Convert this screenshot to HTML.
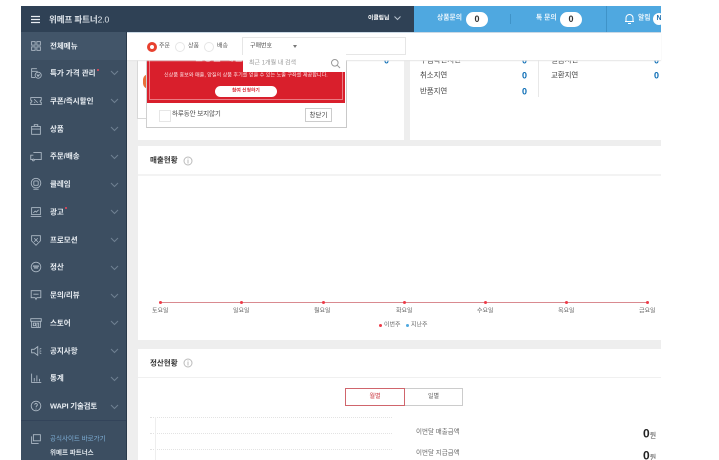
<!DOCTYPE html>
<html lang="ko"><head><meta charset="utf-8"><title>위메프 파트너 2.0</title>
<style>
html,body{margin:0;padding:0;width:719px;height:460px;overflow:hidden;background:#fff}
body{font-family:"Liberation Sans","Noto Sans CJK KR",sans-serif;position:relative}
#w{position:absolute;left:0;top:0;width:719px;height:460px;overflow:hidden;filter:blur(.35px)}
#w div,#w span.a,#w svg{position:absolute}
.t{position:absolute;white-space:nowrap;line-height:12px;transform:translateY(-5.5px)}
.m{left:50px;font-size:7.5px;font-weight:700;color:#e8edf2}
.v{font-size:9px;font-weight:700;color:#0a6cb5}
.l{font-size:7.500px;letter-spacing:-.1px;color:#444}
.g{font-size:6px;color:#666}
svg.i{left:29px;width:14px;height:14px;fill:none;stroke:#aebac6;stroke-width:1}
svg.c{left:110px;width:9px;height:6px;fill:none;stroke:#6f8092;stroke-width:1}
.pill{background:#fff;border-radius:9px;height:15px;color:#333;font-size:9px;font-weight:700;text-align:center;line-height:15px}
.dot{width:3px;height:3px;border-radius:50%;background:#ee3b48;top:301px}
.day{top:311px}
.dl{left:150px;width:242px;height:0;border-top:1px dotted #e3e3e3}
</style></head><body><div id="w">

<div style="left:21px;top:6px;width:640px;height:454px;background:#eeeeee"></div>

<!-- left card + popup -->
<div style="left:138px;top:60px;width:266px;height:80px;background:#fff"></div>
<div style="left:137px;top:60px;width:9px;height:58px;background:#fff;border:1px solid #d8d8d8;border-top:0"></div>
<div style="left:143px;top:74px;width:6px;height:15px;background:#e8703a;border-radius:6px 0 0 6px"></div>
<div style="left:146px;top:60px;width:199px;height:67px;background:#fff;border-right:1px solid #c9c9c9;border-bottom:1px solid #c9c9c9;border-left:1px solid #d0d0d0"></div>
<div style="left:147px;top:60px;width:198px;height:43px;background:#d91f2c"></div>
<div style="left:149px;top:60px;width:194px;height:40px;border:1px solid #ea7b83;border-top:0;box-sizing:border-box"></div>
<span class="t" style="left:194px;top:58px;font-size:10px;font-weight:700;color:#fff">신상품 체험 이벤트</span>
<span class="t" style="left:164px;top:75px;font-size:5.100px;color:#fbdfe1">신상품 홍보와 매출, 양질의 상품 후기를 얻을 수 있는 노출 구좌를 제공합니다.</span>
<div style="left:215px;top:86px;width:62px;height:11px;background:#fff;border-radius:6px"></div>
<span class="t" style="left:232px;top:91px;font-size:4.800px;font-weight:700;color:#d91f2c">참여 신청하기</span>
<div style="left:159px;top:110px;width:10px;height:10px;background:#fff;border:1px solid #e6e6e6"></div>
<span class="t l" style="left:172px;top:114px;font-size:6.500px">하루동안 보지않기</span>
<div style="left:305px;top:108px;width:27px;height:14px;border:1px solid #ccc;box-sizing:border-box;background:#fff;font-size:6.500px;color:#444;text-align:center;line-height:13px">창닫기</div>
<span class="t v" style="left:384px;top:60px">0</span>

<!-- right card -->
<div style="left:410px;top:60px;width:251px;height:80px;background:#fff"></div>
<div style="left:538px;top:60px;width:1px;height:37px;background:#e8e8e8"></div>
<span class="t l" style="left:420px;top:60px">구입확인지연</span><span class="t v" style="left:522px;top:60px">0</span>
<span class="t l" style="left:551px;top:60px">결품지연</span><span class="t v" style="left:654px;top:60px">0</span>
<span class="t l" style="left:420px;top:75px">취소지연</span><span class="t v" style="left:522px;top:75px">0</span>
<span class="t l" style="left:551px;top:75px">교환지연</span><span class="t v" style="left:654px;top:75px">0</span>
<span class="t l" style="left:420px;top:91px">반품지연</span><span class="t v" style="left:522px;top:91px">0</span>

<!-- top filter bar -->
<div style="left:127px;top:32px;width:534px;height:28px;background:#fff;box-shadow:0 1px 1px #e6e6e6"></div>
<div style="left:147px;top:42px;width:4px;height:4px;border:3px solid #e8412f;border-radius:50%;background:#fff"></div>
<span class="t g" style="left:159px;top:46px;color:#555">주문</span>
<div style="left:175px;top:42px;width:8px;height:8px;border:1px solid #e6e6e6;border-radius:50%"></div>
<span class="t g" style="left:188px;top:46px;color:#555">상품</span>
<div style="left:204px;top:42px;width:8px;height:8px;border:1px solid #e6e6e6;border-radius:50%"></div>
<span class="t g" style="left:217px;top:46px;color:#555">배송</span>
<div style="left:242px;top:37px;width:164px;height:18px;border:1px solid #e6e6e6;box-sizing:border-box;background:#fff"></div>
<span class="t g" style="left:250px;top:46px;color:#444">구매번호</span>
<div style="left:293px;top:45px;width:0;height:0;border:2px solid transparent;border-top:3px solid #777"></div>
<div style="left:243px;top:54px;width:103px;height:18px;background:#fff"></div>
<span class="t g" style="left:249px;top:63px;color:#999">최근 1개월 내 검색</span>
<svg style="left:330px;top:58px;width:11px;height:11px" viewBox="0 0 11 11" fill="none" stroke="#999"><circle cx="4.800" cy="4.800" r="3.300"/><path d="M7.300 7.300L10 10"/></svg>

<!-- sales card -->
<div style="left:138px;top:146px;width:523px;height:194px;background:#fff"></div>
<div style="left:138px;top:174px;width:523px;height:2px;background:#f3f3f3"></div>
<span class="t" style="left:150px;top:160px;font-size:7.500px;font-weight:700;color:#333">매출현황</span>
<svg style="left:183px;top:156px;width:10px;height:10px" viewBox="0 0 10 10" fill="none" stroke="#bbb"><circle cx="5" cy="5" r="4"/><path d="M5 4v3.500M5 2.500v1"/></svg>
<div style="left:160px;top:302px;width:487px;height:1px;background:#d98a90"></div>
<div class="dot" style="left:159px"></div><div class="dot" style="left:240px"></div><div class="dot" style="left:322px"></div><div class="dot" style="left:403px"></div><div class="dot" style="left:484px"></div><div class="dot" style="left:565px"></div><div class="dot" style="left:646px"></div>
<span class="t g day" style="left:152px">토요일</span><span class="t g day" style="left:233px">일요일</span><span class="t g day" style="left:314px">월요일</span><span class="t g day" style="left:396px">화요일</span><span class="t g day" style="left:477px">수요일</span><span class="t g day" style="left:558px">목요일</span><span class="t g day" style="left:639px">금요일</span>
<div style="left:379px;top:324px;width:3px;height:3px;border-radius:50%;background:#ee3b48"></div>
<span class="t g" style="left:384px;top:325px">이번주</span>
<div style="left:406px;top:324px;width:3px;height:3px;border-radius:50%;background:#4fa8e0"></div>
<span class="t g" style="left:411px;top:325px">지난주</span>

<!-- settlement card -->
<div style="left:138px;top:349px;width:523px;height:111px;background:#fff"></div>
<div style="left:138px;top:377px;width:523px;height:1px;background:#f0f0f0"></div>
<span class="t" style="left:150px;top:363px;font-size:7.500px;font-weight:700;color:#333">정산현황</span>
<svg style="left:183px;top:358px;width:10px;height:10px" viewBox="0 0 10 10" fill="none" stroke="#bbb"><circle cx="5" cy="5" r="4"/><path d="M5 4v3.500M5 2.500v1"/></svg>
<div style="left:404px;top:388px;width:59px;height:18px;border:1px solid #ccc;box-sizing:border-box;font-size:6px;color:#555;text-align:center;line-height:16px">일별</div>
<div style="left:345px;top:388px;width:60px;height:18px;border:1px solid #d0656c;box-sizing:border-box;font-size:6px;color:#c8323c;text-align:center;line-height:16px;background:#fff">월별</div>
<div class="dl" style="top:417px"></div><div class="dl" style="top:433px"></div><div class="dl" style="top:449px"></div>
<div style="left:155px;top:417px;width:1px;height:43px;background:#eee"></div>
<span class="t g" style="left:416px;top:432px;font-size:6.500px">이번달 매출금액</span>
<span class="t g" style="left:416px;top:453px;font-size:6.500px">이번달 지급금액</span>
<span class="t" style="left:643px;top:433px;font-size:12px;font-weight:700;color:#222">0<span style="font-size:7px;font-weight:400;color:#444">원</span></span>
<span class="t" style="left:643px;top:455px;font-size:12px;font-weight:700;color:#222">0<span style="font-size:7px;font-weight:400;color:#444">원</span></span>

<!-- header -->
<div style="left:21px;top:6px;width:393px;height:26px;background:#2f4155"></div>
<div style="left:414px;top:6px;width:247px;height:26px;background:#4fa8e0"></div>
<div style="left:21px;top:32px;width:640px;height:1px;background:#a8c0d4;opacity:.6"></div>
<svg style="left:30px;top:15px;width:12px;height:9px" viewBox="0 0 12 9" stroke="#e8edf2" stroke-width="1.200"><path d="M1 1.500H10M1 4.500H10M1 7.500H10"/></svg>
<span class="t" style="left:49px;top:19px;font-size:8.500px;letter-spacing:-.1px;font-weight:700;color:#dfe5eb">위메프 파트너<span style="font-weight:400">2.0</span></span>
<span class="t" style="left:368px;top:18px;font-size:5.800px;font-weight:700;color:#fff">이클립님</span>
<svg style="left:394px;top:16px;width:7px;height:5px" viewBox="0 0 7 5" fill="none" stroke="#b9c4cf"><path d="M.5 .5L3.500 3.500L6.500 .5"/></svg>
<span class="t" style="left:437px;top:18px;font-size:6.800px;font-weight:700;color:#e6f3fb">상품문의</span>
<div class="pill" style="left:466px;top:12px;width:22px">0</div>
<div style="left:510px;top:14px;width:1px;height:10px;background:#3f93c8"></div>
<span class="t" style="left:536px;top:18px;font-size:6.800px;font-weight:700;color:#e6f3fb">톡 문의</span>
<div class="pill" style="left:560px;top:12px;width:22px">0</div>
<div style="left:606px;top:6px;width:1px;height:26px;background:#3f93c8"></div>
<svg style="left:624px;top:13px;width:11px;height:12px" viewBox="0 0 11 12" fill="none" stroke="#fff"><path d="M2 8.500V5a3.500 3.500 0 0 1 7 0V8.500M1 8.500H10M4 10.500H7"/></svg>
<span class="t" style="left:638px;top:18px;font-size:6.800px;font-weight:700;color:#e6f3fb">알림</span>
<div style="left:653px;top:13px;width:8px;height:12px;overflow:hidden"><div style="left:0;top:0;width:12px;height:12px;border-radius:50%;background:#fff;color:#1e6fae;font-size:7px;font-weight:700;line-height:12px;text-align:center">N</div></div>

<!-- sidebar -->
<div style="left:21px;top:32px;width:105px;height:428px;background:#3c4e61"></div>
<div style="left:21px;top:32px;width:105px;height:28px;background:#425569"></div>
<div style="left:126px;top:32px;width:1px;height:428px;background:#2a3a4b"></div>
<div style="left:21px;top:420px;width:105px;height:1px;background:#33445a"></div>

<svg class="i" style="top:39px" viewBox="0 0 16 16"><rect x="3" y="3" width="4" height="4"/><rect x="9" y="3" width="4" height="4"/><rect x="3" y="9" width="4" height="4"/><rect x="9" y="9" width="4" height="4"/></svg>
<span class="t m" style="top:46px">전체메뉴</span>

<svg class="i" style="top:66px" viewBox="0 0 16 16"><path d="M9 3H3v10h4M3 6h7"/><circle cx="10.500" cy="10.500" r="3.500"/><path d="M9 9.500l1 2 .5-1 .5 1 1-2"/></svg>
<span class="t m" style="top:73px">특가 가격 관리</span>
<div style="left:97px;top:69px;width:2px;height:2px;border-radius:50%;background:#f0465a"></div>
<svg class="c" style="top:70px" viewBox="0 0 9 6"><path d="M1 1l3.500 3.500L8 1"/></svg>

<svg class="i" style="top:94px" viewBox="0 0 16 16"><path d="M2 4h12v3a1 1 0 0 0 0 2.500V12H2V9.500A1 1 0 0 0 2 7zM6 6l4 4M6 10l1-1"/></svg>
<span class="t m" style="top:101px">쿠폰/즉시할인</span>
<svg class="c" style="top:98px" viewBox="0 0 9 6"><path d="M1 1l3.500 3.500L8 1"/></svg>

<svg class="i" style="top:122px" viewBox="0 0 16 16"><path d="M3 5h10v9H3zM3 8h10M6 5V3h4v2"/></svg>
<span class="t m" style="top:129px">상품</span>
<svg class="c" style="top:126px" viewBox="0 0 9 6"><path d="M1 1l3.500 3.500L8 1"/></svg>

<svg class="i" style="top:149px" viewBox="0 0 16 16"><path d="M5 4h9v8H6M5 7H2v5h2"/><circle cx="5" cy="12.500" r="1"/></svg>
<span class="t m" style="top:156px">주문/배송</span>
<svg class="c" style="top:154px" viewBox="0 0 9 6"><path d="M1 1l3.500 3.500L8 1"/></svg>

<svg class="i" style="top:177px" viewBox="0 0 16 16"><circle cx="8" cy="7" r="5.500"/><rect x="5.500" y="4.500" width="5" height="5" rx="1"/><path d="M5 14h6"/></svg>
<span class="t m" style="top:184px">클레임</span>
<svg class="c" style="top:182px" viewBox="0 0 9 6"><path d="M1 1l3.500 3.500L8 1"/></svg>

<svg class="i" style="top:205px" viewBox="0 0 16 16"><rect x="3" y="3" width="10" height="8"/><path d="M5 9l2-2 1.500 1L11 5.500M2 13h12"/></svg>
<span class="t m" style="top:212px">광고</span>
<div style="left:65px;top:207px;width:2px;height:2px;border-radius:50%;background:#f0465a"></div>
<svg class="c" style="top:209px" viewBox="0 0 9 6"><path d="M1 1l3.500 3.500L8 1"/></svg>

<svg class="i" style="top:233px" viewBox="0 0 16 16"><path d="M3 3h10v6l-5 5-5-5zM6 6l4 4M10 6l-4 4"/></svg>
<span class="t m" style="top:240px">프로모션</span>
<svg class="c" style="top:237px" viewBox="0 0 9 6"><path d="M1 1l3.500 3.500L8 1"/></svg>

<svg class="i" style="top:260px" viewBox="0 0 16 16"><circle cx="8" cy="8" r="5.500"/><path d="M4.500 7h7M5.500 9h5" stroke-width="1.500"/></svg>
<span class="t m" style="top:267px">정산</span>
<svg class="c" style="top:265px" viewBox="0 0 9 6"><path d="M1 1l3.500 3.500L8 1"/></svg>

<svg class="i" style="top:288px" viewBox="0 0 16 16"><path d="M2.500 3h11v8H9l-1 2-1-2H2.500zM5 7h6"/></svg>
<span class="t m" style="top:295px">문의/리뷰</span>
<svg class="c" style="top:293px" viewBox="0 0 9 6"><path d="M1 1l3.500 3.500L8 1"/></svg>

<svg class="i" style="top:316px" viewBox="0 0 16 16"><path d="M2 3h12v3H2zM3 6v7h10V6M5 8h2.500v3H5zM9 8h2v5H9z"/></svg>
<span class="t m" style="top:323px">스토어</span>
<svg class="c" style="top:320px" viewBox="0 0 9 6"><path d="M1 1l3.500 3.500L8 1"/></svg>

<svg class="i" style="top:344px" viewBox="0 0 16 16"><path d="M3 6h3l4-3v10L6 10H3zM12 6l2-1M12 8h2M12 10l2 1"/></svg>
<span class="t m" style="top:351px">공지사항</span>
<svg class="c" style="top:348px" viewBox="0 0 9 6"><path d="M1 1l3.500 3.500L8 1"/></svg>

<svg class="i" style="top:371px" viewBox="0 0 16 16"><path d="M3 3v10h11M6 12V8M9 12V5M12 12V9"/></svg>
<span class="t m" style="top:378px">통계</span>
<svg class="c" style="top:376px" viewBox="0 0 9 6"><path d="M1 1l3.500 3.500L8 1"/></svg>

<svg class="i" style="top:399px" viewBox="0 0 16 16"><circle cx="8" cy="8" r="5.500"/><path d="M6.500 6.500a1.500 1.500 0 1 1 2 1.500L8 9.500M8 11v1"/></svg>
<span class="t m" style="top:406px;letter-spacing:-.2px">WAPI 기술검토</span>
<svg class="c" style="top:404px" viewBox="0 0 9 6"><path d="M1 1l3.500 3.500L8 1"/></svg>

<svg class="i" style="top:432px" viewBox="0 0 16 16"><path d="M5 3h8v7H5zM3 5v8h8"/></svg>
<span class="t" style="left:50px;top:439px;font-size:6.500px;color:#7fb0d8">공식사이트 바로가기</span>
<span class="t" style="left:50px;top:453px;font-size:6.500px;font-weight:700;color:#dfe5eb">위메프 파트너스</span>

</div></body></html>
